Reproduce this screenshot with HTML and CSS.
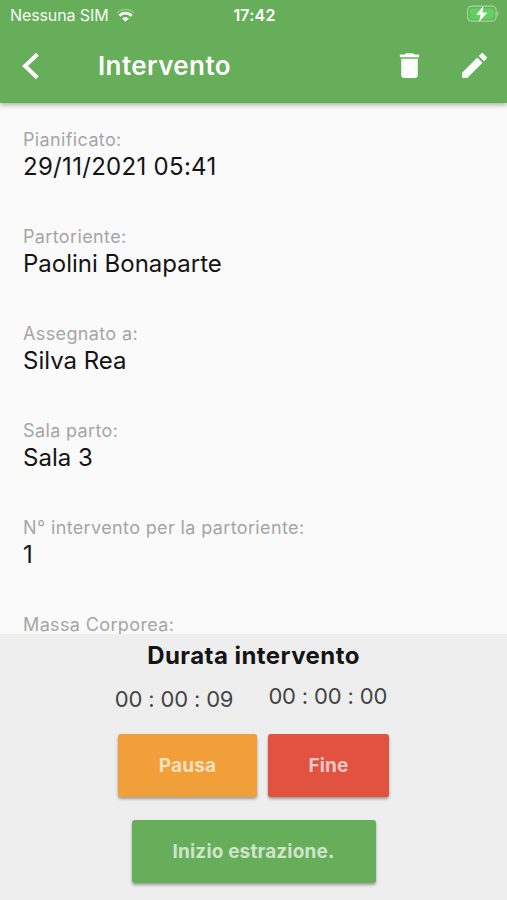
FILE: index.html
```html
<!DOCTYPE html>
<html lang="it">
<head>
    <meta charset="UTF-8">
    <meta name="viewport" content="width=device-width, initial-scale=1.0">
    <title>Intervento</title>
    <link rel="stylesheet" href="styles.css">
</head>
<body>
    <header class="app-header">
        <div class="status-bar">
            <div class="carrier">
                <span>Nessuna SIM</span>
                <svg class="wifi" viewBox="0 0 20 14">
                    <path d="M1 5A12.5 12.5 0 0 1 19 5" fill="none" stroke="#fff" stroke-width="2.2" opacity="0.25"/>
                    <path d="M3.6 8A8.6 8.6 0 0 1 16.4 8" fill="none" stroke="#fff" stroke-width="2.9"/>
                    <path d="M10 14L6.4 10.6A4.8 4.8 0 0 1 13.6 10.6Z" fill="#fff"/>
                </svg>
            </div>
            <div class="clock">17:42</div>
            <svg class="battery" viewBox="0 0 33 18">
                <rect x="1.7" y="1.2" width="28.4" height="15" rx="4" fill="none" stroke="#fff" stroke-opacity="0.45" stroke-width="1.2"/>
                <rect x="3.7" y="3.2" width="24.4" height="11" rx="2.4" fill="#5ed160"/>
                <path d="M31.4 6.5V11.1C33 10.3 33 7.3 31.4 6.5Z" fill="#fff" opacity="0.5"/>
                <path d="M17.6 0.8L10.2 9.8H14.6L13 16.9L21.4 7.6H16.4Z" fill="#fff"/>
            </svg>
        </div>
        <div class="toolbar">
            <svg class="back" viewBox="0 0 18 28">
                <path d="M15.4 2.2L3 14L15.4 25.8" fill="none" stroke="#fff" stroke-width="4"/>
            </svg>
            <h1>Intervento</h1>
            <svg class="icon" viewBox="0 0 24 24">
                <path d="M6 19c0 1.1.9 2 2 2h8c1.1 0 2-.9 2-2V7H6v12zM19 4h-3.5l-1-1h-5l-1 1H5v2h14V4z" fill="#fff"/>
            </svg>
            <svg class="icon" viewBox="0 0 24 24">
                <path d="M3 17.25V21h3.75L17.81 9.94l-3.75-3.75L3 17.25zM20.71 7.04c.39-.39.39-1.02 0-1.41l-2.34-2.34c-.39-.39-1.02-.39-1.41 0l-1.83 1.83 3.75 3.75 1.83-1.83z" fill="#fff"/>
            </svg>
        </div>
    </header>

    <main class="details">
        <div class="field">
            <div class="label">Pianificato:</div>
            <div class="value date">29/11/2021 05:41</div>
        </div>
        <div class="field">
            <div class="label">Partoriente:</div>
            <div class="value">Paolini Bonaparte</div>
        </div>
        <div class="field">
            <div class="label">Assegnato a:</div>
            <div class="value">Silva Rea</div>
        </div>
        <div class="field">
            <div class="label">Sala parto:</div>
            <div class="value">Sala 3</div>
        </div>
        <div class="field">
            <div class="label">N° intervento per la partoriente:</div>
            <div class="value">1</div>
        </div>
        <div class="field">
            <div class="label">Massa Corporea:</div>
        </div>
    </main>

    <section class="timer-panel">
        <h2>Durata intervento</h2>
        <div class="timers">
            <div class="timer running">00 : 00 : 09</div>
            <div class="timer">00 : 00 : 00</div>
        </div>
        <div class="buttons">
            <button class="btn pause">Pausa</button>
            <button class="btn stop">Fine</button>
        </div>
        <button class="btn extract">Inizio estrazione.</button>
    </section>
</body>
</html>
```
FILE: styles.css
```css
* {
    box-sizing: border-box;
}

body {
    margin: 0;
    height: 900px;
    display: flex;
    flex-direction: column;
    overflow: hidden;
    font-family: Inter, "Liberation Sans", sans-serif;
    background: #fafafa;
    color: #141414;
}

.app-header {
    flex: none;
    height: 103px;
    background: #67ae5b;
    color: #fff;
    box-shadow: 0 2px 5px rgba(0, 0, 0, 0.3);
    z-index: 1;
}

.status-bar {
    display: grid;
    grid-template-columns: 1fr auto 1fr;
    align-items: center;
    height: 28px;
    padding: 2px 8px 0 10px;
}

.carrier {
    display: flex;
    align-items: center;
    gap: 7px;
    font-size: 16px;
    line-height: 20px;
    letter-spacing: -0.1px;
    opacity: 0.95;
}

.wifi {
    width: 19px;
    height: 14px;
}

.clock {
    font-size: 16px;
    line-height: 20px;
    font-weight: 600;
    letter-spacing: 0.2px;
}

.battery {
    width: 33px;
    height: 18px;
    justify-self: end;
    margin-top: -2px;
}

.toolbar {
    display: flex;
    align-items: center;
    height: 75px;
    padding: 0 16px 0 22px;
}

.back {
    width: 18px;
    height: 28px;
}

h1 {
    flex: 1;
    margin: 0 0 0 58px;
    font-size: 26px;
    line-height: 32px;
    font-weight: 600;
    letter-spacing: 0.4px;
}

.icon {
    width: 33px;
    height: 33px;
    margin-left: 32px;
}

.details {
    flex: 1;
    min-height: 0;
    overflow: hidden;
    padding: 25px 23px 0;
}

.field {
    height: 97px;
}

.label {
    font-size: 18px;
    line-height: 24px;
    letter-spacing: 0.37px;
    color: #a5a5a5;
}

.value {
    font-size: 24px;
    line-height: 29px;
}

.date {
    letter-spacing: 0.3px;
}

.timer-panel {
    flex: none;
    display: flex;
    flex-direction: column;
    align-items: center;
    height: 266px;
    background: #eee;
}

h2 {
    margin: 7px 0 0;
    font-size: 24px;
    line-height: 30px;
    font-weight: 700;
    letter-spacing: 0.45px;
}

.timers {
    display: flex;
    gap: 35px;
    margin-top: 11px;
    margin-left: -5px;
}

.timer {
    font-size: 22px;
    line-height: 28px;
    letter-spacing: -0.15px;
    color: #444;
}

.running {
    margin-top: 3px;
}

.buttons {
    display: flex;
    gap: 11px;
    margin-top: 21px;
}

.btn {
    height: 63px;
    padding: 0;
    border: none;
    border-radius: 3px;
    font-family: inherit;
    font-size: 19px;
    font-weight: 700;
    letter-spacing: 0.15px;
    color: rgba(255, 255, 255, 0.7);
    box-shadow: 0 2px 3px rgba(0, 0, 0, 0.35);
}

.pause {
    width: 139px;
    background: #f19f38;
}

.stop {
    width: 121px;
    background: #e15241;
}

.extract {
    width: 244px;
    margin-top: 23px;
    background: #67ae5b;
}
```
